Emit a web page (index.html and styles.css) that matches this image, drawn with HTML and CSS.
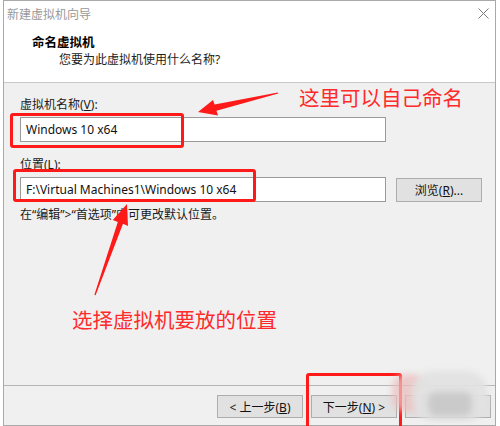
FILE: index.html
```html
<!DOCTYPE html>
<html lang="zh-CN">
<head>
    <meta charset="UTF-8">
    <title>新建虚拟机向导</title>
    <link rel="stylesheet" href="styles.css">
</head>
<body>
    <div class="window">
        <!-- title bar -->
        <div class="titlebar">
            <span class="title">新建虚拟机向导</span>
            <svg class="close" width="11" height="11" viewBox="0 0 11 11">
                <path d="M0.5 0.5 L10.5 10.5 M10.5 0.5 L0.5 10.5" stroke="#7a7a7a" stroke-width="1" fill="none"/>
            </svg>
        </div>
        <!-- wizard header -->
        <div class="header">
            <div class="heading">命名虚拟机</div>
            <div class="subheading">您要为此虚拟机使用什么名称?</div>
        </div>
        <!-- page content -->
        <div class="content">
            <div class="field-label">虚拟机名称(<u>V</u>):</div>
            <div class="input">Windows 10 x64</div>
            <div class="field-label second">位置(<u>L</u>):</div>
            <div class="row">
                <div class="input">F:\Virtual Machines1\Windows 10 x64</div>
                <button class="btn">浏览(<u>R</u>)...</button>
            </div>
            <p class="hint">在“编辑”&gt;“首选项”中可更改默认位置。</p>
        </div>
        <!-- buttons -->
        <div class="footer">
            <button class="btn">&lt; 上一步(<u>B</u>)</button>
            <button class="btn">下一步(<u>N</u>) &gt;</button>
            <button class="btn">取消</button>
        </div>
    </div>

    <!-- red annotations drawn on top of the screenshot -->
    <div class="mark mark-name"></div>
    <div class="mark mark-path"></div>
    <div class="mark mark-next"></div>
    <div class="note note-name">这里可以自己命名</div>
    <div class="note note-path">选择虚拟机要放的位置</div>
    <svg class="arrows" width="500" height="426" viewBox="0 0 500 426">
        <polygon fill="#ff1a1a" points="198,112 218,115.5 216.5,110.8 278.2,93.6 277.8,92.4 214.6,104.6 213,100"/>
        <polygon fill="#ff1a1a" points="127,204 128,226 123,223.8 95.6,295.3 94.4,294.7 117.8,222 112.8,220"/>
    </svg>
    <!-- blurred watermark -->
    <div class="wm wm-pink"></div>
    <div class="wm wm-gray"></div>
    <div class="wm wm-dark"></div>
</body>
</html>
```

FILE: styles.css
```css
html, body {
    margin: 0;
    height: 426px;
    overflow: hidden;
    background: #fff;
}
body {
    position: relative;
    font-family: "Noto Sans", "Noto Sans CJK SC", sans-serif;
    font-size: 12px;
    color: #1a1a1a;
}
.window {
    margin-left: 3px;
    width: 493px;
    height: 426px;
    box-sizing: border-box;
    border: 1px solid #a9a9a9;
    background: #f0f0f0;
}
.titlebar {
    height: 25px;
    display: flex;
    align-items: center;
    justify-content: space-between;
    padding-left: 3px;
    background: #fff;
}
.title {
    color: #999;
    font-size: 12px;
}
.close {
    margin-right: 6px;
}
.header {
    height: 57px;
    box-sizing: border-box;
    padding-top: 8px;
    background: #fff;
    border-bottom: 1px solid #c8c8c8;
}
.heading {
    padding-left: 28px;
    font-weight: bold;
    font-size: 12.5px;
    line-height: 17px;
    color: #000;
}
.subheading {
    padding-left: 55px;
    line-height: 17px;
    color: #222;
}
.content {
    height: 302px;
    box-sizing: border-box;
    padding: 14px 0 0 16px;
}
.field-label {
    line-height: 16px;
}
.field-label.second {
    margin-top: 15px;
}
.input {
    margin-top: 4px;
    width: 366px;
    height: 25px;
    box-sizing: border-box;
    border: 1px solid #9a9a9a;
    background: #fff;
    padding-left: 5px;
    line-height: 23px;
    color: #111;
}
.row {
    display: flex;
    align-items: flex-end;
    gap: 10px;
}
.row .btn {
    width: 86px;
    height: 24px;
    margin-bottom: 0;
}
.btn {
    width: 86px;
    height: 23px;
    padding: 0;
    border: 1px solid #adadad;
    background: #e1e1e1;
    font-family: "Noto Sans", "Noto Sans CJK SC", sans-serif;
    font-size: 12px;
    color: #111;
}
.hint {
    margin: 5px 0 0;
    line-height: 16px;
}
.footer {
    height: 40px;
    box-sizing: border-box;
    border-top: 1px solid #b5b5b5;
    padding: 9px 4px 0 0;
    display: flex;
    justify-content: flex-end;
    gap: 8px;
}

/* annotations */
.mark {
    position: absolute;
    border: 3px solid #ff1a1a;
    border-radius: 3px;
    box-sizing: border-box;
}
.mark-name {
    left: 10px;
    top: 113px;
    width: 174px;
    height: 35px;
}
.mark-path {
    left: 13px;
    top: 169px;
    width: 243px;
    height: 33px;
}
.mark-next {
    left: 306px;
    top: 373px;
    width: 96px;
    height: 60px;
}
.note {
    position: absolute;
    font-family: "Noto Sans CJK SC", sans-serif;
    font-size: 20.5px;
    line-height: 22px;
    color: #ff2a2a;
    white-space: nowrap;
}
.note-name {
    left: 299px;
    top: 86px;
}
.note-path {
    left: 72px;
    top: 308px;
}
.arrows {
    position: absolute;
    left: 0;
    top: 0;
}
.wm {
    position: absolute;
    filter: blur(3px);
}
.wm-pink {
    left: 392px;
    top: 374px;
    width: 34px;
    height: 38px;
    border-radius: 14px;
    background: rgba(236, 190, 190, 0.75);
}
.wm-gray {
    left: 412px;
    top: 371px;
    width: 76px;
    height: 50px;
    border-radius: 22px;
    background: rgba(225, 225, 225, 0.95);
}
.wm-dark {
    left: 428px;
    top: 392px;
    width: 44px;
    height: 24px;
    border-radius: 8px;
    background: rgba(200, 200, 200, 0.9);
}
```
